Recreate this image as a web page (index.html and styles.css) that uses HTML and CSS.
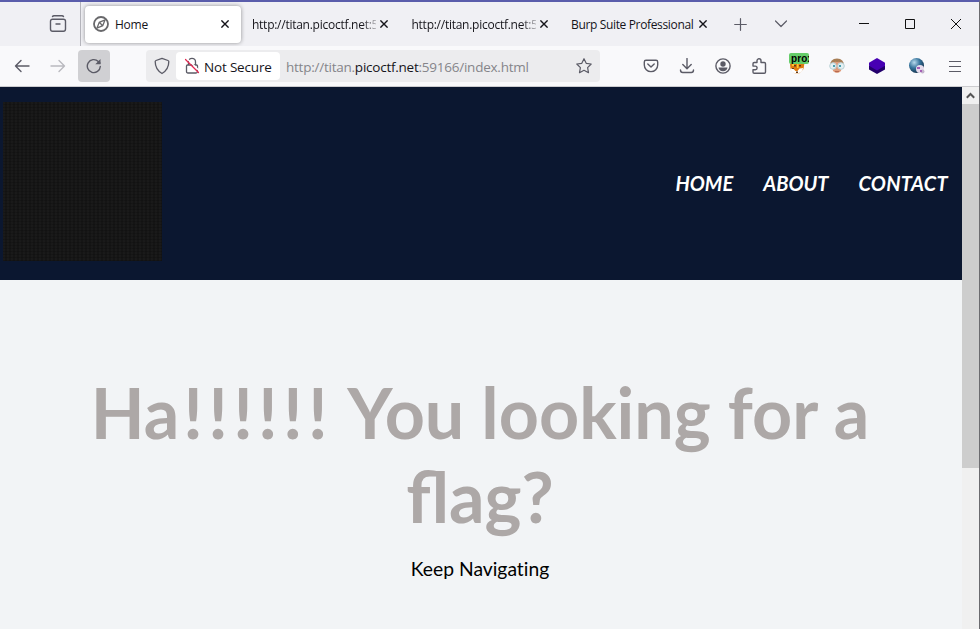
FILE: index.html
```html
<!DOCTYPE html>
<html lang="en">
<head>
<meta charset="utf-8">
<title>Home</title>
<link rel="stylesheet" href="styles.css">
</head>
<body>
<div class="window">
  <div class="tabstrip">
    <div class="view">
      <svg class="line" width="18" height="18" viewBox="0 0 18 18"><path d="M3.500 1.500Q4 .8 5 .8h8Q14 .8 14.500 1.500M1.500 7V6.300Q1.500 4.200 3.600 4.200h10.800Q16.500 4.200 16.500 6.300V14Q16.500 16.200 14.400 16.200H3.600Q1.500 16.200 1.500 14V6.300M7 9h4"/></svg>
    </div>
    <div class="tab active">
      <svg class="compass" width="16" height="16" viewBox="0 0 16 16"><circle cx="8" cy="8" r="7"/><path d="M12 4 9.700 9.700 4 12 6.300 6.300zM6.300 6.300 9.700 9.700"/></svg>
      <span class="label home">Home</span>
      <svg class="close" width="8" height="8" viewBox="0 0 8 8"><path d="M.4.4 7.600 7.600M7.600.4.400 7.600"/></svg>
    </div>
    <div class="tab"><span class="label fade">http://titan.picoctf.net:5</span><svg class="close" width="8" height="8" viewBox="0 0 8 8"><path d="M.4.4 7.600 7.600M7.600.4.400 7.600"/></svg></div>
    <div class="tab"><span class="label fade">http://titan.picoctf.net:5</span><svg class="close" width="8" height="8" viewBox="0 0 8 8"><path d="M.4.4 7.600 7.600M7.600.4.400 7.600"/></svg></div>
    <div class="tab"><span class="label burp">Burp Suite Professional</span><svg class="close" width="8" height="8" viewBox="0 0 8 8"><path d="M.4.4 7.600 7.600M7.600.4.400 7.600"/></svg></div>
    <div class="strip-btn"><svg class="line thin" width="13" height="13" viewBox="0 0 13 13"><path d="M6.500 .7v11.600M.7 6.500h11.600"/></svg></div>
    <div class="strip-btn"><svg class="line thin" width="12" height="8" viewBox="0 0 12 8"><path d="M.5 1 6 6.500 11.500 1"/></svg></div>
    <div class="controls">
      <svg width="10" height="10" viewBox="0 0 10 10"><path d="M0 4.500h10"/></svg>
      <svg width="10" height="10" viewBox="0 0 10 10"><path d="M.5.5h9v9h-9z"/></svg>
      <svg width="10" height="10" viewBox="0 0 10 10"><path d="M0 0 10 10M10 0 0 10"/></svg>
    </div>
  </div>
  <div class="toolbar">
    <div class="btn"><svg class="line" width="16" height="16" viewBox="0 0 16 16"><path d="M7 2.500 1.500 8 7 13.500M1.500 8H15"/></svg></div>
    <div class="btn dim"><svg class="line" width="16" height="16" viewBox="0 0 16 16"><path d="M9 2.500 14.500 8 9 13.500M14.500 8H1"/></svg></div>
    <div class="btn"><div class="reload"><svg class="line" width="16" height="16" viewBox="0 0 16 16"><path d="M14.300 8.500A6.500 6.500 0 1 1 12.300 3.400L14 5"/><path class="solid" d="M14.500 1v5.200H9.300z"/></svg></div></div>
    <div class="urlbar">
      <svg class="line shield" width="16" height="18" viewBox="0 0 16 18"><path d="M8 1.300 14 3.500Q14.800 3.800 14.800 4.600C14.800 10 12.500 14 8 16.500 3.500 14 1.200 10 1.200 4.600 1.200 3.800 2 3.500 2 3.500z"/></svg>
      <div class="identity">
        <svg class="line lock" width="16" height="18" viewBox="0 0 16 18"><path d="M4.500 8V4.800a3.500 3.500 0 0 1 7 0V8M3.500 8h9q1 0 1 1v5.500q0 1.500-1.500 1.500H4q-1.500 0-1.500-1.500V9q0-1 1-1z"/><path class="gap" d="M3 1.500 15 13.500"/><path class="slash" d="M1.500 2.500 14.500 15.500"/></svg>
        <span>Not Secure</span>
      </div>
      <span class="url">http://titan.<b>picoctf.net</b>:59166/index.html</span>
      <svg class="line star" width="18" height="18" viewBox="0 0 18 18"><path d="M9 1.700 11.200 6.300 16.200 7 12.600 10.600 13.500 15.700 9 13.300 4.500 15.700 5.400 10.600 1.800 7 6.800 6.300z"/></svg>
    </div>
    <div class="actions">
      <div class="btn"><svg class="line" width="16" height="16" viewBox="0 0 16 16"><path d="M3 2.200h10q1.700 0 1.700 1.700v3A6.700 6.700 0 0 1 1.300 6.900v-3Q1.300 2.200 3 2.200zM4.800 6 8 9 11.200 6"/></svg></div>
      <div class="btn"><svg class="line" width="16" height="16" viewBox="0 0 16 16"><path d="M8 .5v10M3.800 6.500 8 10.700 12.200 6.500M1.500 12q0 2.500 2.200 2.500h8.600q2.200 0 2.200-2.500"/></svg></div>
      <div class="btn"><svg class="line" width="16" height="16" viewBox="0 0 16 16"><circle cx="8" cy="8" r="7.100"/><circle class="solid" cx="8" cy="6" r="2.700"/><path class="solid" d="M3.500 9.600h9Q12 13.200 8 13.200T3.500 9.600z"/></svg></div>
      <div class="btn"><svg class="line" width="16" height="16" viewBox="0 0 16 16"><path d="M6 4.500V2.800a2 2 0 0 1 4 0V4.500h3.300q1.200 0 1.200 1.200V14q0 1.200-1.200 1.200H3.200Q2 15.200 2 14V11.700h2.300a1.800 1.800 0 0 0 0-3.600H2V5.700q0-1.200 1.200-1.200z"/></svg></div>
      <div class="ext">
        <svg width="16" height="16" viewBox="0 0 16 16"><path fill="#df7c12" d="M1 6 3 2H13l2.300 4-.8 5L10 15.500H6L1.500 11z"/><path fill="#fff" d="m1.500 10.500 3 .5 2 2h2l2-2.500 4-.5-2 3.500-3 2H6L3 13.500z"/><path fill="#623918" d="M5 7h2v1.500H5zM10 7h2v1.500h-2zM7 13.500h2V15H7zM3 10h2v1H3z"/><path fill="#ffc52d" d="M8 6h1.500v4H8zM3 4h2v4H3z"/></svg>
        <span class="badge">prox</span>
      </div>
      <div class="ext"><svg width="16" height="16" viewBox="0 0 16 16"><path fill="#a77e55" d="M1 8Q1 .5 8 .5T15 8l-1.500 2h-11z"/><path fill="#df9c7b" d="M3 6q2-3 5-2 4-1 5 2l-1 7q-4 4-8 0z"/><circle cx="4" cy="8" r="3.300" fill="#e4f0f3" stroke="#b9d0d4"/><circle cx="12" cy="8" r="3.300" fill="#e4f0f3" stroke="#b9d0d4"/><path fill="#4aa0b1" d="M4 7h2v2H4zM10 7h2v2h-2z"/><path stroke="#b76a50" d="M6 13.500h4"/></svg></div>
      <div class="ext"><svg width="16" height="16" viewBox="0 0 16 16"><path fill="#23006c" d="M0 7.800h16v3.700L8 16 0 11.500z"/><path fill="#4700b3" d="M8 0 16 4.800v3L8 12.500 0 7.800v-3z"/></svg></div>
      <div class="ext"><svg width="16" height="16" viewBox="0 0 16 16"><defs><radialGradient id="g" cx=".35" cy=".3" r=".75"><stop offset="0" stop-color="#b7d9ec"/><stop offset=".5" stop-color="#37749c"/><stop offset="1" stop-color="#122f49"/></radialGradient></defs><circle cx="7.500" cy="7.500" r="7.500" fill="url(#g)"/><circle cx="11" cy="11" r="4" fill="#e7dcec"/><circle cx="13.500" cy="13.500" r="2" fill="#c4b4cc"/><path fill="#a45eb5" d="M8 9h3v2H8zM11 12h2v2h-2z"/></svg></div>
      <div class="btn"><svg class="line menu" width="12" height="12" viewBox="0 0 12 12"><path d="M0 1.500h12M0 6.500h12M0 11.500h12"/></svg></div>
    </div>
  </div>
  <div class="viewport">
    <main class="page">
      <header class="banner">
        <div class="logo"></div>
        <nav><a>HOME</a><a>ABOUT</a><a class="contact">CONTACT</a></nav>
      </header>
      <section class="hero">
        <h1>Ha<span class="bang">!!!!!!</span> You looking for a flag?</h1>
        <p>Keep Navigating</p>
      </section>
    </main>
    <div class="scrollbar">
      <div class="arrow"><svg width="9" height="7" viewBox="0 0 9 7"><path d="M.8 5.700 4.500 2 8.200 5.700"/></svg></div>
      <div class="thumb"></div>
    </div>
  </div>
</div>
</body>
</html>
```
FILE: styles.css
```css
* { box-sizing: border-box; }
body { margin: 0; font-family: "Open Sans", "Noto Sans", sans-serif; color: #15141a; overflow: hidden; }
svg { display: block; flex: none; }
.window { width: 980px; height: 629px; display: flex; flex-direction: column; border-top: 2px solid #5a5dab; border-right: 1px solid #6b6b6f; }
.line { fill: none; stroke: #5b5b66; stroke-width: 1.4; stroke-linejoin: round; stroke-linecap: round; }
.line.thin { stroke-width: 1.2; }
.solid { fill: #5b5b66; stroke: none; }

.tabstrip { height: 44px; background: #f0f0f4; display: flex; align-items: center; font-size: 12px; }
.view { width: 81px; height: 44px; padding: 0 13px 0 0; border-right: 1px solid #b5b5bc; display: flex; align-items: center; justify-content: flex-end; margin-right: 4px; flex: none; }
.tab { width: 159.5px; height: 38px; padding-left: 9px; display: flex; align-items: center; flex: none; }
.tab.active { width: 156px; padding-left: 8px; background: #fff; border-radius: 4px; box-shadow: 0 0 4px rgba(0, 0, 0, .4); margin: 0 2px 0 0; height: 37px; }
.label { white-space: nowrap; overflow: hidden; width: 124px; margin-right: 4px; letter-spacing: -.26px; }
.label.home { width: 102px; margin: 0 4px 0 6px; }
.label.fade { -webkit-mask-image: linear-gradient(to right, #000 110px, transparent 128px); mask-image: linear-gradient(to right, #000 110px, transparent 128px); }
.label.burp { letter-spacing: -.35px; }
.compass { fill: none; stroke: #68686b; stroke-width: 1.8; }
.compass path { stroke-width: 1.3; }
.close { fill: none; stroke: #15141a; stroke-width: 1.4; }
.strip-btn { width: 40px; display: flex; justify-content: center; position: relative; left: -1px; }
.controls { margin-left: auto; padding-right: 18px; display: flex; gap: 36px; fill: none; stroke: #111; stroke-width: 1; }

.toolbar { height: 41px; background: #f9f9fb; border-bottom: 1px solid #cccccf; display: flex; align-items: center; padding-left: 4px; }
.btn { width: 36px; height: 40px; display: flex; align-items: center; justify-content: center; flex: none; }
.dim { opacity: .4; }
.reload { width: 32px; height: 32px; flex: none; border-radius: 4px; background: #d0d0d3; display: flex; align-items: center; justify-content: center; }
.urlbar { width: 454px; height: 32px; margin-left: 34px; background: #ececee; border-radius: 4px; display: flex; align-items: center; padding: 0 7px 0 8px; font-size: 13.500px; }
.identity { width: 104px; height: 28px; margin: 0 6px; background: #fff; border-radius: 4px; display: flex; align-items: center; padding-left: 8px; gap: 4px; letter-spacing: -.18px; white-space: nowrap; flex: none; }
.identity span, .url { padding-top: 2px; }
.line.shield, .line.lock { stroke-width: 1.3; }
.line .gap { stroke: #fff; stroke-width: 1.5; }
.line .slash { stroke: #e22850; stroke-width: 1.2; }
.url { color: #85858a; letter-spacing: -.24px; white-space: nowrap; }
.url b { font-weight: 400; color: #15141a; }
.star { margin-left: auto; }
.line.star, .line.menu { stroke-width: 1.2; }
.actions { margin-left: 33px; display: flex; }
.ext { width: 40px; height: 40px; display: flex; align-items: center; justify-content: center; position: relative; }
.badge { position: absolute; left: 12px; top: 7px; width: 20px; height: 11px; overflow: hidden; background: #65cd69; border-radius: 2px; color: #000; font: bold 10px/11px "Liberation Sans", sans-serif; padding-left: 2px; letter-spacing: .1px; }

.viewport { flex: 1; display: flex; min-height: 0; }
.page { flex: 1; background: #f2f4f6; font-family: Lato, sans-serif; }
.banner { height: 193px; background: #0b1730; display: flex; align-items: center; justify-content: space-between; padding: 0 14px 4px 3px; }
.logo { width: 159px; height: 159px; background-color: #151515; background-image: repeating-linear-gradient(0deg, rgba(0, 0, 0, .15) 0 1px, transparent 1px 3px), repeating-linear-gradient(90deg, rgba(255, 255, 255, .02) 0 2px, transparent 2px 4px); }
nav { display: flex; gap: 30px; color: #fff; font-size: 20px; line-height: 24px; font-style: italic; font-weight: 700; padding-top: 3px; }
.contact { letter-spacing: .3px; }
.hero { padding: 90px 81px 0 79px; text-align: center; }
h1 { margin: 0; font-size: 70px; line-height: 84px; font-weight: 700; color: #ada8a7; }
.bang { letter-spacing: 5.3px; margin-left: 4px; }
p { margin: 19px 0 0; font-size: 19.300px; line-height: 24px; color: #000; font-variant-ligatures: none; }
.scrollbar { width: 17px; background: #f0f0f0; }
.arrow { height: 17px; display: flex; align-items: center; justify-content: center; fill: none; stroke: #555; stroke-width: 2; }
.thumb { height: 364px; background: #cdcdcd; }
```
